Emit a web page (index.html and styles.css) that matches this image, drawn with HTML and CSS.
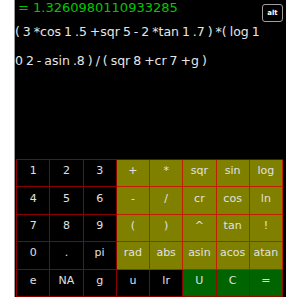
FILE: index.html
```html
<!DOCTYPE html>
<html>
<head>
<meta charset="utf-8">
<link rel="stylesheet" href="styles.css">
</head>
<body>
<div class="screen">
  <div class="top">
    <div class="result">= 1.3260980110933285</div>
    <div class="alt">alt</div>
  </div>
  <div class="expr">( 3 *cos 1 .5 +sqr 5 - 2 *tan 1 .7 ) *( log 1<br>0 2 - asin .8 ) / ( sqr 8 +cr 7 +g )</div>
  <div class="pad">
    <div class="key">1</div><div class="key">2</div><div class="key">3</div><div class="key op">+</div><div class="key op">*</div><div class="key op">sqr</div><div class="key op">sin</div><div class="key op">log</div>
    <div class="key">4</div><div class="key">5</div><div class="key">6</div><div class="key op">-</div><div class="key op">/</div><div class="key op">cr</div><div class="key op">cos</div><div class="key op">ln</div>
    <div class="key">7</div><div class="key">8</div><div class="key">9</div><div class="key op">(</div><div class="key op">)</div><div class="key op">^</div><div class="key op">tan</div><div class="key op">!</div>
    <div class="key">0</div><div class="key">.</div><div class="key">pi</div><div class="key op">rad</div><div class="key op">abs</div><div class="key op">asin</div><div class="key op">acos</div><div class="key op">atan</div>
    <div class="key">e</div><div class="key">NA</div><div class="key">g</div><div class="key">u</div><div class="key">lr</div><div class="key act">U</div><div class="key act">C</div><div class="key act">=</div>
  </div>
</div>
</body>
</html>
```
FILE: styles.css
```css
html, body {
  margin: 0;
  padding: 0;
  background: #fff;
}
body {
  font-family: "DejaVu Sans", sans-serif;
}
.screen {
  margin-left: 14px;
  width: 271px;
  height: 297px;
  background: #000;
  border-left: 1px solid #9a9a9a;
  box-shadow: 0 1px 0 #b0b0b0;
  display: flex;
  flex-direction: column;
}
.top {
  display: flex;
  justify-content: space-between;
  align-items: flex-start;
  height: 17px;
}
.result {
  color: #00c800;
  font-size: 13px;
  line-height: 15px;
  padding-left: 3px;
}
.alt {
  margin: 4px 3px 0 0;
  width: 19px;
  height: 16px;
  border: 1px solid #a0a0a0;
  border-radius: 3px;
  color: #fff;
  font-size: 7px;
  font-weight: bold;
  display: flex;
  align-items: center;
  justify-content: center;
}
.expr {
  color: #e6e6e6;
  font-size: 12.5px;
  line-height: 29px;
  word-spacing: -1px;
  padding-left: 0;
  flex: 1;
  white-space: nowrap;
}
.pad {
  margin: 0 3px 0 1px;
  display: grid;
  grid-template-columns: repeat(8, 1fr);
  grid-template-rows: repeat(5, 1fr);
  height: 137px;
  border-top: 1px solid #8b0000;
  border-left: 1px solid #8b0000;
}
.key {
  border-right: 1px solid #8b0000;
  border-bottom: 1px solid #8b0000;
  color: #e0e0e0;
  font-size: 11px;
  display: flex;
  align-items: center;
  justify-content: center;
  padding-bottom: 5px;
  background: #000;
}
.op {
  background: #808000;
  border-color: #c02000;
}
.act {
  background: #006400;
  border-color: #8b1000;
}
```
